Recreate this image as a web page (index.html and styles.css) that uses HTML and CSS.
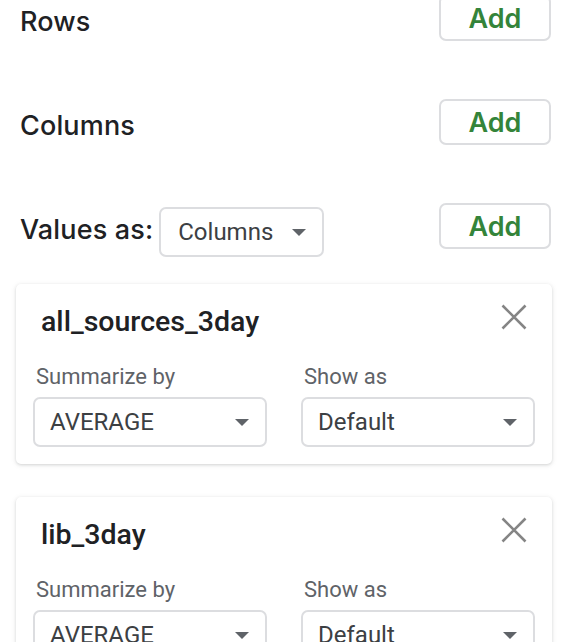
FILE: index.html
```html
<!DOCTYPE html>
<html>
<head>
<meta charset="utf-8">
<link rel="stylesheet" href="styles.css">
</head>
<body>
<div class="editor">
  <div class="section first">
    <div class="label">Rows</div>
    <button class="add">Add</button>
  </div>
  <div class="section">
    <div class="label">Columns</div>
    <button class="add">Add</button>
  </div>
  <div class="section">
    <div class="values">
      <div class="label">Values as:</div>
      <div class="select small"><span>Columns</span><i class="caret"></i></div>
    </div>
    <button class="add">Add</button>
  </div>

  <div class="card">
    <div class="card-head">
      <div class="title">all_sources_3day</div>
      <svg class="close" width="26" height="26" viewBox="0 0 26 26"><path d="M1.5 1.5L24.5 24.5M24.5 1.5L1.5 24.5" stroke="#858585" stroke-width="2.6" fill="none"/></svg>
    </div>
    <div class="fields">
      <div class="field">
        <div class="flabel">Summarize by</div>
        <div class="select"><span>AVERAGE</span><i class="caret"></i></div>
      </div>
      <div class="field">
        <div class="flabel">Show as</div>
        <div class="select"><span>Default</span><i class="caret"></i></div>
      </div>
    </div>
  </div>

  <div class="card">
    <div class="card-head">
      <div class="title">lib_3day</div>
      <svg class="close" width="26" height="26" viewBox="0 0 26 26"><path d="M1.5 1.5L24.5 24.5M24.5 1.5L1.5 24.5" stroke="#858585" stroke-width="2.6" fill="none"/></svg>
    </div>
    <div class="fields">
      <div class="field">
        <div class="flabel">Summarize by</div>
        <div class="select"><span>AVERAGE</span><i class="caret"></i></div>
      </div>
      <div class="field">
        <div class="flabel">Show as</div>
        <div class="select"><span>Default</span><i class="caret"></i></div>
      </div>
    </div>
  </div>
</div>
</body>
</html>
```

FILE: styles.css
```css
html, body {
  margin: 0;
  padding: 0;
  background: #ffffff;
  overflow: hidden;
}
.editor {
  width: 572px;
  font-family: Roboto, "Liberation Sans", sans-serif;
  color: #202124;
}
.section {
  display: flex;
  justify-content: space-between;
  align-items: flex-start;
  padding: 0 21px 0 20px;
  margin-top: 58px;
}
.section.first {
  margin-top: -5px;
}
.label {
  font-family: Inter, "Liberation Sans", sans-serif;
  font-weight: 500;
  font-size: 27px;
  height: 46px;
  line-height: 54px;
  color: #202124;
  letter-spacing: 0.15px;
}
.values {
  display: flex;
  align-items: flex-start;
}
.values .select {
  margin-left: 6px;
  margin-top: 4px;
}
.add {
  width: 112px;
  height: 46px;
  box-sizing: border-box;
  border: 2px solid #dcdde0;
  border-radius: 7px;
  background: #fff;
  font-family: Inter, "Liberation Sans", sans-serif;
  font-weight: 600;
  font-size: 27px;
  color: #34843a;
  padding: 0;
}
.select {
  box-sizing: border-box;
  height: 50px;
  width: 234px;
  border: 2px solid #dcdde0;
  border-radius: 7px;
  display: flex;
  align-items: center;
  justify-content: space-between;
  padding: 0 16px 0 15px;
  font-size: 24px;
  color: #3c4043;
}
.select.small {
  width: 165px;
  padding: 0 16px 0 17px;
}
.caret {
  width: 0;
  height: 0;
  border-left: 7.5px solid transparent;
  border-right: 7.5px solid transparent;
  border-top: 7.5px solid #5f6368;
}
.card {
  margin: 27px 20px 0 16px;
  padding: 17px;
  border-radius: 5px;
  background: #fff;
  box-shadow: 0 1px 3px rgba(60, 64, 67, 0.18), 0 1px 6px rgba(60, 64, 67, 0.08);
}
.card + .card {
  margin-top: 33px;
}
.card-head {
  display: flex;
  justify-content: space-between;
  align-items: flex-start;
}
.title {
  font-weight: 500;
  font-size: 28.5px;
  line-height: 42px;
  height: 44px;
  padding-left: 8px;
  color: #202124;
}
.close {
  margin-top: 3px;
  margin-right: 8px;
}
.fields {
  display: flex;
  gap: 34px;
  margin-top: 18px;
}
.field {
  width: 234px;
}
.flabel {
  font-size: 22px;
  line-height: 28px;
  color: #5f6368;
  padding-left: 3px;
  margin-bottom: 6px;
}
```
